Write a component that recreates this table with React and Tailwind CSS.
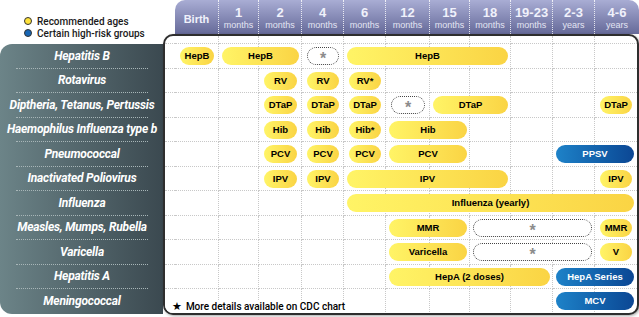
const HEAD = [
  { n: "Birth" },
  { n: "1", u: "months" },
  { n: "2", u: "months" },
  { n: "4", u: "months" },
  { n: "6", u: "months" },
  { n: "12", u: "months" },
  { n: "15", u: "months" },
  { n: "18", u: "months" },
  { n: "19-23", u: "months" },
  { n: "2-3", u: "years" },
  { n: "4-6", u: "years" },
];

const VACCINES = [
  "Hepatitis B",
  "Rotavirus",
  "Diptheria, Tetanus, Pertussis",
  "Haemophilus Influenza type b",
  "Pneumococcal",
  "Inactivated Poliovirus",
  "Influenza",
  "Measles, Mumps, Rubella",
  "Varicella",
  "Hepatitis A",
  "Meningococcal",
];

const ROWS = [
  "row-start-1", "row-start-2", "row-start-3", "row-start-4", "row-start-5", "row-start-6",
  "row-start-7", "row-start-8", "row-start-9", "row-start-10", "row-start-11", "row-start-12",
];
const COLS = [
  "col-start-1", "col-start-2", "col-start-3", "col-start-4", "col-start-5", "col-start-6",
  "col-start-7", "col-start-8", "col-start-9", "col-start-10", "col-start-11", "col-start-12",
];

// one entry per dose bar: grid placement, label, kind (y = recommended, b = high-risk, d = see chart)
const PILLS = [
  { at: "row-start-2 col-start-2", t: "HepB" },
  { at: "row-start-2 col-start-3 col-span-2", t: "HepB", wide: true },
  { at: "row-start-2 col-start-5", t: "*", k: "d" },
  { at: "row-start-2 col-start-6 col-span-4", t: "HepB", wide: true },

  { at: "row-start-3 col-start-4", t: "RV" },
  { at: "row-start-3 col-start-5", t: "RV" },
  { at: "row-start-3 col-start-6", t: "RV*" },

  { at: "row-start-4 col-start-4", t: "DTaP" },
  { at: "row-start-4 col-start-5", t: "DTaP" },
  { at: "row-start-4 col-start-6", t: "DTaP" },
  { at: "row-start-4 col-start-7", t: "*", k: "d" },
  { at: "row-start-4 col-start-8 col-span-2", t: "DTaP", wide: true },
  { at: "row-start-4 col-start-12", t: "DTaP" },

  { at: "row-start-5 col-start-4", t: "Hib" },
  { at: "row-start-5 col-start-5", t: "Hib" },
  { at: "row-start-5 col-start-6", t: "Hib*" },
  { at: "row-start-5 col-start-7 col-span-2", t: "Hib", wide: true },

  { at: "row-start-6 col-start-4", t: "PCV" },
  { at: "row-start-6 col-start-5", t: "PCV" },
  { at: "row-start-6 col-start-6", t: "PCV" },
  { at: "row-start-6 col-start-7 col-span-2", t: "PCV", wide: true },
  { at: "row-start-6 col-start-11 col-span-2", t: "PPSV", k: "b", wide: true },

  { at: "row-start-7 col-start-4", t: "IPV" },
  { at: "row-start-7 col-start-5", t: "IPV" },
  { at: "row-start-7 col-start-6 col-span-4", t: "IPV", wide: true },
  { at: "row-start-7 col-start-12", t: "IPV" },

  { at: "row-start-8 col-start-6 col-span-7", t: "Influenza (yearly)", wide: true },

  { at: "row-start-9 col-start-7 col-span-2", t: "MMR", wide: true },
  { at: "row-start-9 col-start-9 col-span-3", t: "*", k: "d", wide: true },
  { at: "row-start-9 col-start-12", t: "MMR" },

  { at: "row-start-10 col-start-7 col-span-2", t: "Varicella", wide: true },
  { at: "row-start-10 col-start-9 col-span-3", t: "*", k: "d", wide: true },
  { at: "row-start-10 col-start-12", t: "V" },

  { at: "row-start-11 col-start-7 col-span-4", t: "HepA (2 doses)", wide: true },
  { at: "row-start-11 col-start-11 col-span-2", t: "HepA Series", k: "b", wide: true },

  { at: "row-start-12 col-start-11 col-span-2", t: "MCV", k: "b", wide: true },
];

const KIND = {
  y: "bg-linear-to-r from-[#fff466] to-[#fad444] text-black text-[9.5px]",
  b: "bg-linear-to-r from-[#1e82c8] to-[#0c4794] text-white text-[9.5px]",
  d: "border-[1.5px] border-dotted border-[#444] bg-white text-[#8c8c8c] text-[16px] pt-[6px]",
};

function Legend() {
  return (
    <div className="h-[44px] pt-[15px] pl-[24px] flex flex-col font-['Roboto',sans-serif]">
      <div className="h-[12px] flex items-center gap-[5px] text-[10px] font-medium text-[#1a1a1a]">
        <span className="w-[8px] h-[8px] rounded-full border border-[#333] bg-[#ffe23a]" />
        Recommended ages
      </div>
      <div className="h-[12px] flex items-center gap-[5px] text-[10px] font-medium text-[#1a1a1a]">
        <span className="w-[8px] h-[8px] rounded-full border border-[#333] bg-[#1766b5]" />
        Certain high-risk groups
      </div>
    </div>
  );
}

function Panel() {
  return (
    <div className="h-[270px] rounded-l-[12px] bg-linear-to-r from-[#6c8488] to-[#3b4950] pl-[16px] pr-[15px] flex flex-col">
      {VACCINES.map((v) => (
        <div
          key={v}
          className="h-[24.5px] shrink-0 flex items-center justify-center border-b border-dotted border-[#a8b6b8] last:border-b-0"
        >
          <span className="whitespace-nowrap text-white font-bold italic text-[12px] tracking-[-0.2px] font-['Roboto',sans-serif]">
            {v}
          </span>
        </div>
      ))}
    </div>
  );
}

function Header() {
  return (
    <div className="ml-[12px] h-[34px] rounded-t-[10px] bg-linear-to-b from-[#a9add4] to-[#666a99] grid grid-cols-[44px_40px_43px_42px_42px_44px_40px_41px_42px_42px_44px] text-[#f0f1fb]">
      {HEAD.map((h) =>
        h.u ? (
          <div key={h.n} className="flex flex-col items-center pt-[6px] border-r border-dotted border-white/80 last:border-r-0">
            <span className="text-[13px] font-bold leading-[14px]">{h.n}</span>
            <span className="text-[9px] leading-[11px] text-[#e3e5f3]">{h.u}</span>
          </div>
        ) : (
          <div key={h.n} className="flex flex-col items-center pt-[13px] border-r border-dotted border-white/80">
            <span className="text-[11px] font-bold leading-[12px]">{h.n}</span>
          </div>
        )
      )}
    </div>
  );
}

function Body() {
  const cells = [];
  for (let r = 0; r < 12; r++) {
    for (let c = 0; c < 12; c++) {
      cells.push(
        <div
          key={`${r}-${c}`}
          className={`${ROWS[r]} ${COLS[c]} border-dotted border-[#c8c8c8] ${r < 11 ? "border-b" : ""} ${
            c > 0 && c < 11 ? "border-r" : ""
          }`}
        />
      );
    }
  }

  return (
    <div className="h-[281px] border-2 border-[#2e2e2e] rounded-[10px] bg-white overflow-hidden shadow-[1px_1px_3px_rgba(0,0,0,0.35)] grid grid-cols-[10px_44px_40px_43px_42px_42px_44px_40px_41px_42px_42px_42px] grid-rows-[8px_repeat(11,24.5px)]">
      {cells}
      {PILLS.map((p, i) => (
        <div
          key={i}
          className={`${p.at} ${p.wide ? "mx-[3px]" : "mx-[5px]"} ${KIND[p.k || "y"]} self-center h-[18px] rounded-full flex items-center justify-center font-bold whitespace-nowrap`}
        >
          {p.t}
        </div>
      ))}
      <div className="row-start-12 col-start-1 col-span-7 self-end justify-self-start mb-[1px] pl-[7px] pr-[2px] bg-white flex items-center gap-[4px] text-[10px] leading-[12px] font-medium text-black font-['Roboto',sans-serif]">
        <span className="text-[11px] font-['DejaVu_Sans',sans-serif]">★</span>
        More details available on CDC chart
      </div>
    </div>
  );
}

export default function App() {
  return (
    <div className="w-[639px] h-[317px] bg-white flex overflow-hidden font-['Liberation_Sans',Arial,sans-serif]">
      <div className="w-[163px] shrink-0 flex flex-col">
        <Legend />
        <Panel />
      </div>
      <div className="flex-1 min-w-0 flex flex-col">
        <Header />
        <Body />
      </div>
    </div>
  );
}
